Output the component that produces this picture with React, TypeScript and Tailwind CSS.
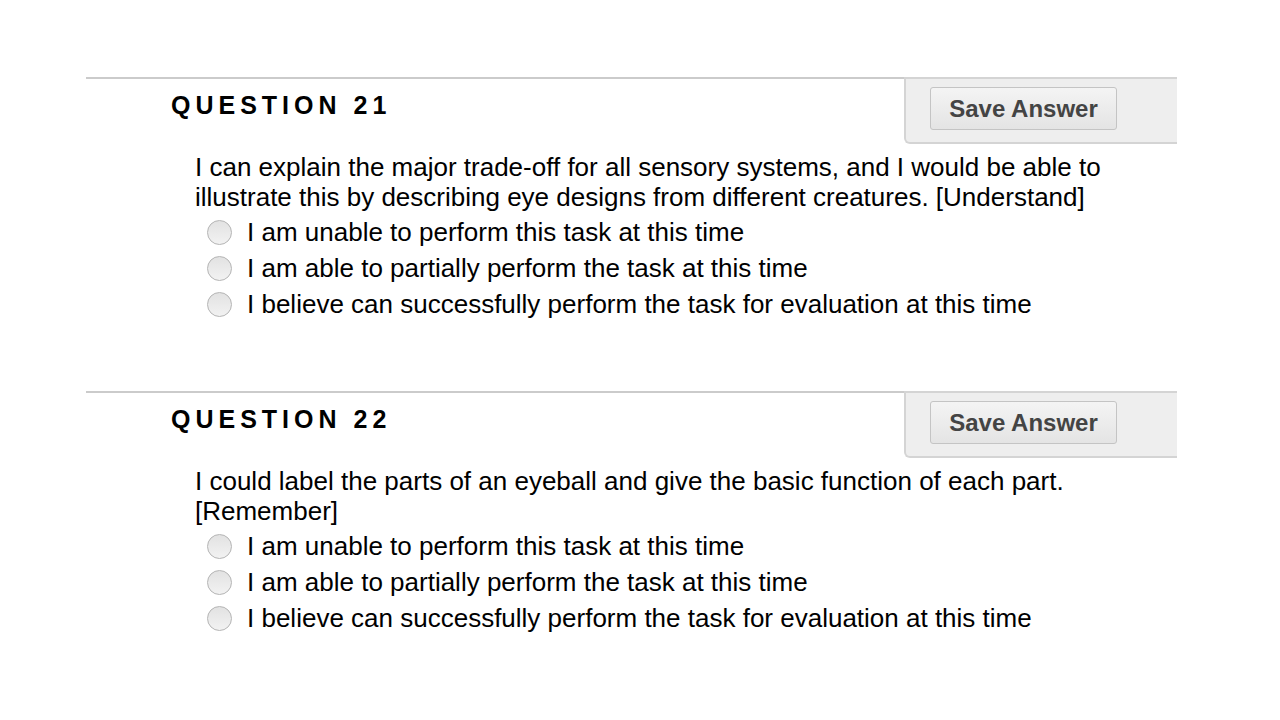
const questions = [
  {
    number: 21,
    text: 'I can explain the major trade-off for all sensory systems, and I would be able to illustrate this by describing eye designs from different creatures. [Understand]',
  },
  {
    number: 22,
    text: 'I could label the parts of an eyeball and give the basic function of each part. [Remember]',
  },
]

const options = [
  'I am unable to perform this task at this time',
  'I am able to partially perform the task at this time',
  'I believe can successfully perform the task for evaluation at this time',
]

function Radio() {
  return (
    <span className="w-[25px] h-[25px] shrink-0 rounded-full border border-[#b4b4b4] bg-gradient-to-b from-[#e2e2e2] to-[#f2f2f2]" />
  )
}

function Question({ number, text }: { number: number; text: string }) {
  return (
    <section className="mb-[69px]">
      <div className="flex border-t-2 border-[#cbcbcb]">
        <h2 className="flex-1 pl-[85px] pt-[12px] text-[25px] font-bold tracking-[5px] text-black leading-[28px]">
          QUESTION {number}
        </h2>
        <div className="w-[273px] h-[67px] -mt-[2px] border-t-2 border-l-2 border-b-2 border-[#d4d4d4] rounded-bl-[6px] bg-[#eeeeee] pl-[24px] pt-[8px]">
          <button className="w-[187px] h-[43px] rounded-[3px] border border-[#c4c4c4] bg-gradient-to-b from-[#f4f4f4] to-[#e4e4e4] text-[24px] font-bold text-[#444444]">
            Save Answer
          </button>
        </div>
      </div>
      <div className="pl-[109px] pr-[60px] mt-[8px]">
        <p className="text-[26px] leading-[30px] text-black max-w-[920px]">{text}</p>
        <ul className="pl-[12px] mt-[2px]">
          {options.map((o) => (
            <li key={o} className="flex items-center gap-[15px] h-[36px]">
              <Radio />
              <span className="text-[26px] text-black leading-[30px]">{o}</span>
            </li>
          ))}
        </ul>
      </div>
    </section>
  )
}

export default function App() {
  return (
    <div className="w-[1280px] h-[720px] bg-white font-['Liberation_Sans',Arial,sans-serif] overflow-hidden">
      <div className="ml-[86px] w-[1091px] pt-[77px]">
        {questions.map((q) => (
          <Question key={q.number} {...q} />
        ))}
      </div>
    </div>
  )
}
